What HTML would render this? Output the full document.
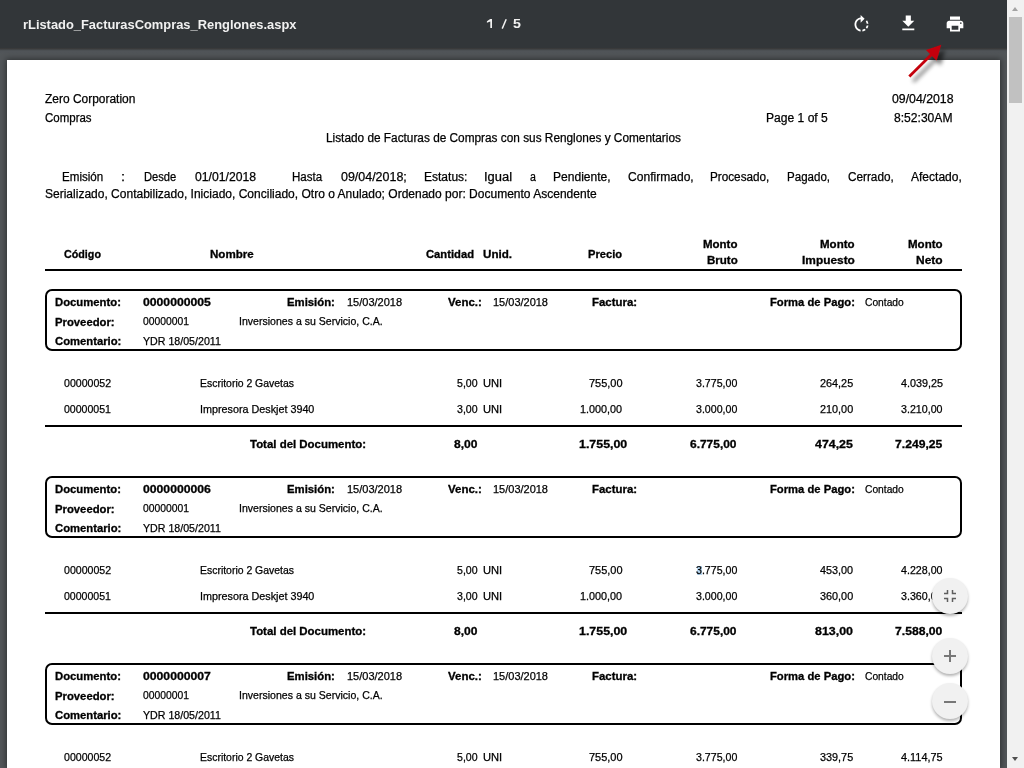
<!DOCTYPE html>
<html><head><meta charset="utf-8">
<style>
html,body{margin:0;padding:0;width:1024px;height:768px;overflow:hidden;background:#525659;position:relative;font-family:"Liberation Sans",sans-serif}
#tb{position:absolute;left:0;top:0;width:1007px;height:48px;background:#323639}
#tbshadow{position:absolute;left:0;top:48px;width:1007px;height:12px;background:linear-gradient(#393939 0px,#3a3b3c 1px,#4a4e51 2px,#505458 3.5px,#525659 6px)}
#page{position:absolute;left:7px;top:60px;width:993px;height:708px;background:#fff;box-shadow:0 0 6px 1px rgba(0,0,0,.45)}
#sb{position:absolute;left:1007px;top:0;width:17px;height:768px;background:#f1f1f1}
#thumb{position:absolute;left:1009px;top:17px;width:13px;height:86px;background:#c1c1c1}
.t{position:absolute;white-space:pre;color:#000;transform-origin:0 0;line-height:normal}
.r11{font:11px/11px "Liberation Sans",sans-serif;-webkit-text-stroke:0.25px #000}
.b11{font:bold 11px/11px "Liberation Sans",sans-serif;-webkit-text-stroke:0.3px #000}
.r12{font:12px/12px "Liberation Sans",sans-serif;-webkit-text-stroke:0.25px #000}
.r13{font:13px/13px "Liberation Sans",sans-serif}
.b13{font:bold 13px/13px "Liberation Sans",sans-serif}
.b12{font:bold 12px/12px "Liberation Sans",sans-serif}
.box{position:absolute;box-sizing:border-box;border:2px solid #000;border-radius:7px}
.rule{position:absolute;background:#000}
.title{position:absolute;color:#fff;white-space:pre;transform-origin:0 0}
.fab{position:absolute;width:36px;height:36px;border-radius:50%;background:#f1f1f1;box-shadow:0 2px 3px rgba(0,0,0,.3)}
</style></head><body>
<div id="tb"></div>
<div id="tbshadow"></div>
<div id="page"></div>
<div class="box" style="left:45px;top:289px;width:917px;height:62px"></div>
<div class="box" style="left:45px;top:476px;width:917px;height:62px"></div>
<div class="box" style="left:45px;top:663px;width:917px;height:62px"></div>
<div class="rule" style="left:45px;top:269px;width:917px;height:2px"></div>
<div class="rule" style="left:45px;top:425px;width:917px;height:2px"></div>
<div class="rule" style="left:45px;top:612px;width:917px;height:2px"></div>
<div style="position:absolute;left:697px;top:566px;width:5px;height:9px;background:rgba(120,180,230,.55)"></div>
<div class="t b13" style="left:23.18px;top:18px;transform:scaleX(0.9909);color:#f1f1f1">rListado_FacturasCompras_Renglones.aspx</div>
<div class="t b13" style="left:513.05px;top:17px;transform:scaleX(1.0951);color:#f1f1f1">5</div>
<div class="t r12" style="left:44.91px;top:93px;transform:scaleX(0.9964)">Zero Corporation</div>
<div class="t r12" style="left:45.00px;top:112px;transform:scaleX(0.9575)">Compras</div>
<div class="t r12" style="left:892.40px;top:93px;transform:scaleX(1.0245)">09/04/2018</div>
<div class="t r12" style="left:765.91px;top:112px;transform:scaleX(1.0064)">Page 1 of 5</div>
<div class="t r12" style="left:893.80px;top:112px;transform:scaleX(1.0073)">8:52:30AM</div>
<div class="t r12" style="left:325.93px;top:132px;transform:scaleX(0.9853)">Listado de Facturas de Compras con sus Renglones y Comentarios</div>
<div class="t r12" style="left:62.34px;top:171px;transform:scaleX(0.9654)">Emisión</div>
<div class="t r12" style="left:121.17px;top:171px;transform:scaleX(1.2109)">:</div>
<div class="t r12" style="left:143.68px;top:171px;transform:scaleX(0.9292)">Desde</div>
<div class="t r12" style="left:195.00px;top:171px;transform:scaleX(1.0161)">01/01/2018</div>
<div class="t r12" style="left:291.65px;top:171px;transform:scaleX(0.9620)">Hasta</div>
<div class="t r12" style="left:340.80px;top:171px;transform:scaleX(1.0376)">09/04/2018;</div>
<div class="t r12" style="left:424.11px;top:171px;transform:scaleX(1.0013)">Estatus:</div>
<div class="t r12" style="left:484.09px;top:171px;transform:scaleX(1.0776)">Igual</div>
<div class="t r12" style="left:529.80px;top:171px;transform:scaleX(0.8827)">a</div>
<div class="t r12" style="left:553.31px;top:171px;transform:scaleX(1.0042)">Pendiente,</div>
<div class="t r12" style="left:628.20px;top:171px;transform:scaleX(1.0053)">Confirmado,</div>
<div class="t r12" style="left:710.33px;top:171px;transform:scaleX(0.9776)">Procesado,</div>
<div class="t r12" style="left:786.55px;top:171px;transform:scaleX(0.9624)">Pagado,</div>
<div class="t r12" style="left:847.90px;top:171px;transform:scaleX(0.9802)">Cerrado,</div>
<div class="t r12" style="left:911.24px;top:171px;transform:scaleX(1.0031)">Afectado,</div>
<div class="t r12" style="left:44.60px;top:188px;transform:scaleX(1.0012)">Serializado, Contabilizado, Iniciado, Conciliado, Otro o Anulado; Ordenado por: Documento Ascendente</div>
<div class="t b11" style="left:64.41px;top:249px;transform:scaleX(0.9759)">Código</div>
<div class="t b11" style="left:210.13px;top:249px;transform:scaleX(1.0527)">Nombre</div>
<div class="t b11" style="left:426.41px;top:249px;transform:scaleX(1.0207)">Cantidad</div>
<div class="t b11" style="left:483.00px;top:249px;transform:scaleX(1.0563)">Unid.</div>
<div class="t b11" style="left:588.46px;top:249px;transform:scaleX(1.0123)">Precio</div>
<div class="t b11" style="left:703.23px;top:239px;transform:scaleX(1.0442)">Monto</div>
<div class="t b11" style="left:707.23px;top:255px;transform:scaleX(1.0487)">Bruto</div>
<div class="t b11" style="left:820.03px;top:239px;transform:scaleX(1.0473)">Monto</div>
<div class="t b11" style="left:801.61px;top:255px;transform:scaleX(1.0813)">Impuesto</div>
<div class="t b11" style="left:907.73px;top:239px;transform:scaleX(1.0473)">Monto</div>
<div class="t b11" style="left:916.00px;top:255px;transform:scaleX(1.0890)">Neto</div>
<div class="t b11" style="left:54.65px;top:297px;transform:scaleX(1.0270)">Documento:</div>
<div class="t b11" style="left:142.51px;top:297px;transform:scaleX(1.1085)">0000000005</div>
<div class="t b11" style="left:287.24px;top:297px;transform:scaleX(1.0309)">Emisión:</div>
<div class="t r11" style="left:346.74px;top:297px;transform:scaleX(1.0005)">15/03/2018</div>
<div class="t b11" style="left:447.54px;top:297px;transform:scaleX(1.0449)">Venc.:</div>
<div class="t r11" style="left:493.45px;top:297px;transform:scaleX(0.9987)">15/03/2018</div>
<div class="t b11" style="left:592.04px;top:297px;transform:scaleX(1.0379)">Factura:</div>
<div class="t b11" style="left:770.25px;top:297px;transform:scaleX(1.0219)">Forma de Pago:</div>
<div class="t r11" style="left:865.10px;top:297px;transform:scaleX(0.9313)">Contado</div>
<div class="t b11" style="left:54.65px;top:317px;transform:scaleX(1.0263)">Proveedor:</div>
<div class="t r11" style="left:142.51px;top:316px;transform:scaleX(0.9415)">00000001</div>
<div class="t r11" style="left:239.43px;top:316px;transform:scaleX(0.9590)">Inversiones a su Servicio, C.A.</div>
<div class="t b11" style="left:55.41px;top:336px;transform:scaleX(1.0244)">Comentario:</div>
<div class="t r11" style="left:142.51px;top:336px;transform:scaleX(0.9666)">YDR 18/05/2011</div>
<div class="t r11" style="left:64.41px;top:378px;transform:scaleX(0.9606)">00000052</div>
<div class="t r11" style="left:200.31px;top:378px;transform:scaleX(0.9492)">Escritorio 2 Gavetas</div>
<div class="t r11" style="left:456.80px;top:378px;transform:scaleX(0.9613)">5,00</div>
<div class="t r11" style="left:483.29px;top:378px;transform:scaleX(1.0122)">UNI</div>
<div class="t r11" style="left:588.80px;top:378px;transform:scaleX(0.9976)">755,00</div>
<div class="t r11" style="left:695.80px;top:378px;transform:scaleX(0.9649)">3.775,00</div>
<div class="t r11" style="left:819.70px;top:378px;transform:scaleX(0.9864)">264,25</div>
<div class="t r11" style="left:900.53px;top:378px;transform:scaleX(0.9818)">4.039,25</div>
<div class="t r11" style="left:64.41px;top:404px;transform:scaleX(0.9602)">00000051</div>
<div class="t r11" style="left:200.21px;top:404px;transform:scaleX(0.9793)">Impresora Deskjet 3940</div>
<div class="t r11" style="left:456.80px;top:404px;transform:scaleX(0.9613)">3,00</div>
<div class="t r11" style="left:483.29px;top:404px;transform:scaleX(1.0122)">UNI</div>
<div class="t r11" style="left:579.76px;top:404px;transform:scaleX(0.9821)">1.000,00</div>
<div class="t r11" style="left:695.80px;top:404px;transform:scaleX(0.9649)">3.000,00</div>
<div class="t r11" style="left:819.70px;top:404px;transform:scaleX(0.9856)">210,00</div>
<div class="t r11" style="left:900.50px;top:404px;transform:scaleX(0.9695)">3.210,00</div>
<div class="t b11" style="left:249.57px;top:439px;transform:scaleX(1.0397)">Total del Documento:</div>
<div class="t b11" style="left:454.01px;top:439px;transform:scaleX(1.0935)">8,00</div>
<div class="t b11" style="left:579.02px;top:439px;transform:scaleX(1.1273)">1.755,00</div>
<div class="t b11" style="left:690.01px;top:439px;transform:scaleX(1.0857)">6.775,00</div>
<div class="t b11" style="left:815.07px;top:439px;transform:scaleX(1.1248)">474,25</div>
<div class="t b11" style="left:894.61px;top:439px;transform:scaleX(1.1066)">7.249,25</div>
<div class="t b11" style="left:54.65px;top:484px;transform:scaleX(1.0270)">Documento:</div>
<div class="t b11" style="left:142.51px;top:484px;transform:scaleX(1.1090)">0000000006</div>
<div class="t b11" style="left:287.24px;top:484px;transform:scaleX(1.0309)">Emisión:</div>
<div class="t r11" style="left:346.74px;top:484px;transform:scaleX(1.0005)">15/03/2018</div>
<div class="t b11" style="left:447.54px;top:484px;transform:scaleX(1.0449)">Venc.:</div>
<div class="t r11" style="left:493.45px;top:484px;transform:scaleX(0.9987)">15/03/2018</div>
<div class="t b11" style="left:592.04px;top:484px;transform:scaleX(1.0379)">Factura:</div>
<div class="t b11" style="left:770.25px;top:484px;transform:scaleX(1.0219)">Forma de Pago:</div>
<div class="t r11" style="left:865.10px;top:484px;transform:scaleX(0.9313)">Contado</div>
<div class="t b11" style="left:54.65px;top:504px;transform:scaleX(1.0263)">Proveedor:</div>
<div class="t r11" style="left:142.51px;top:503px;transform:scaleX(0.9415)">00000001</div>
<div class="t r11" style="left:239.43px;top:503px;transform:scaleX(0.9590)">Inversiones a su Servicio, C.A.</div>
<div class="t b11" style="left:55.41px;top:523px;transform:scaleX(1.0244)">Comentario:</div>
<div class="t r11" style="left:142.51px;top:523px;transform:scaleX(0.9666)">YDR 18/05/2011</div>
<div class="t r11" style="left:64.41px;top:565px;transform:scaleX(0.9606)">00000052</div>
<div class="t r11" style="left:200.31px;top:565px;transform:scaleX(0.9492)">Escritorio 2 Gavetas</div>
<div class="t r11" style="left:456.80px;top:565px;transform:scaleX(0.9613)">5,00</div>
<div class="t r11" style="left:483.29px;top:565px;transform:scaleX(1.0122)">UNI</div>
<div class="t r11" style="left:588.80px;top:565px;transform:scaleX(0.9976)">755,00</div>
<div class="t r11" style="left:695.80px;top:565px;transform:scaleX(0.9649)">3.775,00</div>
<div class="t r11" style="left:819.73px;top:565px;transform:scaleX(0.9848)">453,00</div>
<div class="t r11" style="left:900.53px;top:565px;transform:scaleX(0.9689)">4.228,00</div>
<div class="t r11" style="left:64.41px;top:591px;transform:scaleX(0.9602)">00000051</div>
<div class="t r11" style="left:200.21px;top:591px;transform:scaleX(0.9793)">Impresora Deskjet 3940</div>
<div class="t r11" style="left:456.80px;top:591px;transform:scaleX(0.9613)">3,00</div>
<div class="t r11" style="left:483.29px;top:591px;transform:scaleX(1.0122)">UNI</div>
<div class="t r11" style="left:579.76px;top:591px;transform:scaleX(0.9821)">1.000,00</div>
<div class="t r11" style="left:695.80px;top:591px;transform:scaleX(0.9649)">3.000,00</div>
<div class="t r11" style="left:819.70px;top:591px;transform:scaleX(0.9856)">360,00</div>
<div class="t r11" style="left:900.50px;top:591px;transform:scaleX(0.9695)">3.360,00</div>
<div class="t b11" style="left:249.57px;top:626px;transform:scaleX(1.0397)">Total del Documento:</div>
<div class="t b11" style="left:454.01px;top:626px;transform:scaleX(1.0935)">8,00</div>
<div class="t b11" style="left:579.02px;top:626px;transform:scaleX(1.1273)">1.755,00</div>
<div class="t b11" style="left:690.01px;top:626px;transform:scaleX(1.0857)">6.775,00</div>
<div class="t b11" style="left:815.01px;top:626px;transform:scaleX(1.1303)">813,00</div>
<div class="t b11" style="left:894.61px;top:626px;transform:scaleX(1.1066)">7.588,00</div>
<div class="t b11" style="left:54.65px;top:671px;transform:scaleX(1.0270)">Documento:</div>
<div class="t b11" style="left:142.51px;top:671px;transform:scaleX(1.1092)">0000000007</div>
<div class="t b11" style="left:287.24px;top:671px;transform:scaleX(1.0309)">Emisión:</div>
<div class="t r11" style="left:346.74px;top:671px;transform:scaleX(1.0005)">15/03/2018</div>
<div class="t b11" style="left:447.54px;top:671px;transform:scaleX(1.0449)">Venc.:</div>
<div class="t r11" style="left:493.45px;top:671px;transform:scaleX(0.9987)">15/03/2018</div>
<div class="t b11" style="left:592.04px;top:671px;transform:scaleX(1.0379)">Factura:</div>
<div class="t b11" style="left:770.25px;top:671px;transform:scaleX(1.0219)">Forma de Pago:</div>
<div class="t r11" style="left:865.10px;top:671px;transform:scaleX(0.9313)">Contado</div>
<div class="t b11" style="left:54.65px;top:691px;transform:scaleX(1.0263)">Proveedor:</div>
<div class="t r11" style="left:142.51px;top:690px;transform:scaleX(0.9415)">00000001</div>
<div class="t r11" style="left:239.43px;top:690px;transform:scaleX(0.9590)">Inversiones a su Servicio, C.A.</div>
<div class="t b11" style="left:55.41px;top:710px;transform:scaleX(1.0244)">Comentario:</div>
<div class="t r11" style="left:142.51px;top:710px;transform:scaleX(0.9666)">YDR 18/05/2011</div>
<div class="t r11" style="left:64.41px;top:752px;transform:scaleX(0.9606)">00000052</div>
<div class="t r11" style="left:200.31px;top:752px;transform:scaleX(0.9492)">Escritorio 2 Gavetas</div>
<div class="t r11" style="left:456.80px;top:752px;transform:scaleX(0.9613)">5,00</div>
<div class="t r11" style="left:483.29px;top:752px;transform:scaleX(1.0122)">UNI</div>
<div class="t r11" style="left:588.80px;top:752px;transform:scaleX(0.9976)">755,00</div>
<div class="t r11" style="left:695.80px;top:752px;transform:scaleX(0.9649)">3.775,00</div>
<div class="t r11" style="left:819.70px;top:752px;transform:scaleX(0.9864)">339,75</div>
<div class="t r11" style="left:900.53px;top:752px;transform:scaleX(0.9915)">4.114,75</div>
<svg style="position:absolute;left:850.5px;top:14px" width="21" height="21" viewBox="0 0 24 24"><path fill="#fff" d="M15.55 5.55L11 1v3.07C7.06 4.56 4 7.92 4 12s3.05 7.44 7 7.93v-2.02c-2.84-.48-5-2.94-5-5.91s2.16-5.43 5-5.91V10l4.55-4.45zM19.93 11c-.17-1.39-.72-2.73-1.62-3.89l-1.42 1.42c.54.75.88 1.6 1.02 2.47h2.02zM13 17.9v2.02c1.39-.17 2.74-.71 3.9-1.61l-1.44-1.44c-.75.54-1.59.89-2.46 1.03zm3.89-2.42l1.42 1.41c.9-1.16 1.45-2.5 1.62-3.89h-2.02c-.14.87-.48 1.72-1.02 2.48z"/></svg>
<svg style="position:absolute;left:897.7px;top:13.4px" width="20.6" height="20.6" viewBox="0 0 24 24"><path fill="#fff" d="M19 9h-4V3H9v6H5l7 7 7-7zM5 18v2h14v-2H5z"/></svg>
<svg style="position:absolute;left:945px;top:13.5px" width="20" height="20" viewBox="0 0 24 24"><path fill="#fff" d="M19 8H5c-1.66 0-3 1.34-3 3v6h4v4h12v-4h4v-6c0-1.66-1.34-3-3-3zm-3 11H8v-5h8v5zm3-7c-.55 0-1-.45-1-1s.45-1 1-1 1 .45 1 1-.45 1-1 1zm1-9H6v4h12V3z"/></svg>
<svg style="position:absolute;left:0;top:0" width="600" height="40"><path fill="#f1f1f1" d="M490.2 19.1H492V28H490.3V21.5L486.9 22.7V21.2Z"/><line x1="502.2" y1="28.6" x2="506.2" y2="19.2" stroke="#f1f1f1" stroke-width="1.5"/></svg>
<div id="sb"></div>
<div id="thumb"></div>
<div class="fab" style="left:932px;top:578px"></div>
<div class="fab" style="left:932px;top:638px"></div>
<div class="fab" style="left:932px;top:683px"></div>
<svg style="position:absolute;left:0;top:0;overflow:visible" width="1024" height="768">
<defs><filter id="sh" x="-50%" y="-50%" width="200%" height="200%"><feGaussianBlur in="SourceAlpha" stdDeviation="2.2"/><feOffset dx="4" dy="5"/><feComponentTransfer><feFuncA type="linear" slope="0.55"/></feComponentTransfer><feMerge><feMergeNode/><feMergeNode in="SourceGraphic"/></feMerge></filter></defs>
<g filter="url(#sh)"><line x1="909.3" y1="76.6" x2="932" y2="54" stroke="#c4000a" stroke-width="2.8"/><polygon points="941.3,44.8 926,50 936.5,60.4" fill="#c4000a"/></g>
</svg>
<div style="position:absolute;left:1012px;top:7px;width:0;height:0;border-left:3.5px solid transparent;border-right:3.5px solid transparent;border-bottom:4px solid #a3a3a3"></div>
<div style="position:absolute;left:1012px;top:757px;width:0;height:0;border-left:3.5px solid transparent;border-right:3.5px solid transparent;border-top:4px solid #505050"></div>
<svg style="position:absolute;left:938px;top:584px" width="24" height="24" viewBox="0 0 24 24"><path fill="none" stroke="#5f5f5f" stroke-width="1.5" d="M6 9.5H9.5V6M18 9.5H14.5V6M6 14.5H9.5V18M18 14.5H14.5V18"/></svg>
<svg style="position:absolute;left:938px;top:644px" width="24" height="24" viewBox="0 0 24 24"><path fill="none" stroke="#777" stroke-width="2" d="M6 12h12M12 6v12"/></svg>
<svg style="position:absolute;left:938px;top:689.5px" width="24" height="24" viewBox="0 0 24 24"><path fill="none" stroke="#777" stroke-width="2" d="M6 12h12"/></svg>
</body></html>
